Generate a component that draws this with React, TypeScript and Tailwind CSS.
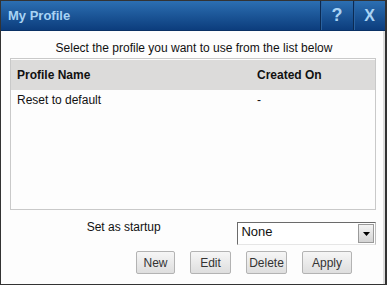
import React from 'react';

const buttons = [
  { label: 'New', w: 'w-[39px]' },
  { label: 'Edit', w: 'w-[41px]' },
  { label: 'Delete', w: 'w-[41px]' },
  { label: 'Apply', w: 'w-[50px]' },
];

export default function App() {
  return (
    <div className="w-[387px] h-[285px] border border-[#333] border-r-2 flex flex-col bg-[#fdfdfd] font-['Liberation_Sans',Arial,sans-serif] text-[12px] text-[#111]">
      {/* Title bar */}
      <div className="h-[30px] flex items-stretch bg-gradient-to-b from-[#2c6fb2] to-[#0c3d7d] border-b border-[#0a3164]">
        <div className="flex-1 flex items-center pl-[7px] text-[13px] font-bold text-[#a9d3f4]">My Profile</div>
        <div className="w-[33px] flex items-center justify-center border-l border-[#0b2a52] shadow-[inset_1px_0_0_#2a62a0] text-[18px] font-bold text-[#a9d3f4]">?</div>
        <div className="w-[32px] flex items-center justify-center border-l border-[#0b2a52] shadow-[inset_1px_0_0_#2a62a0] text-[16px] font-bold text-[#a9d3f4]">X</div>
      </div>

      {/* Body */}
      <div className="flex-1 flex flex-col pl-[9px] pr-[7px] border-r-2 border-[#dcdcdc]">
        <div className="text-center mt-[10px] leading-[14px] pl-[2px]">Select the profile you want to use from the list below</div>

        <div className="mt-[3px] h-[152px] border border-[#c9c9c9] bg-[#fdfdfd]">
          <div className="h-[30px] bg-[#dcdbda] flex items-center font-bold px-[6px] mt-[1px]">
            <div className="w-[240px]">Profile Name</div>
            <div>Created On</div>
          </div>
          <div className="h-[20px] flex items-center px-[6px]">
            <div className="w-[240px]">Reset to default</div>
            <div>-</div>
          </div>
        </div>

        <div className="flex items-start mt-[12px]">
          <div className="w-[228px] text-center leading-[10px]">Set as startup</div>
          <div className="w-[139px] h-[23px] flex border border-[#6b6b6b] border-r-[#bdbdbd] border-b-[#e6e6e6] bg-white">
            <div className="flex-1 pl-[3px] leading-[18px] text-[13px]">None</div>
            <div className="w-[16px] my-[1px] mr-[1px] border border-[#9a9a9a] bg-gradient-to-b from-[#f4f4f4] to-[#d4d4d4] flex items-center justify-center">
              <svg width="7" height="4" viewBox="0 0 7 4"><path d="M0 0h7L3.5 4z" fill="#000" /></svg>
            </div>
          </div>
        </div>

        <div className="flex gap-[15px] mt-[6px] pl-[126px]">
          {buttons.map((b) => (
            <div
              key={b.label}
              className={`${b.w} h-[23px] flex items-center justify-center border border-[#b3b3b3] rounded-[2px] bg-gradient-to-b from-[#f6f6f6] to-[#dedede] text-[#333] text-[12px]`}
            >
              {b.label}
            </div>
          ))}
        </div>
      </div>
    </div>
  );
}
